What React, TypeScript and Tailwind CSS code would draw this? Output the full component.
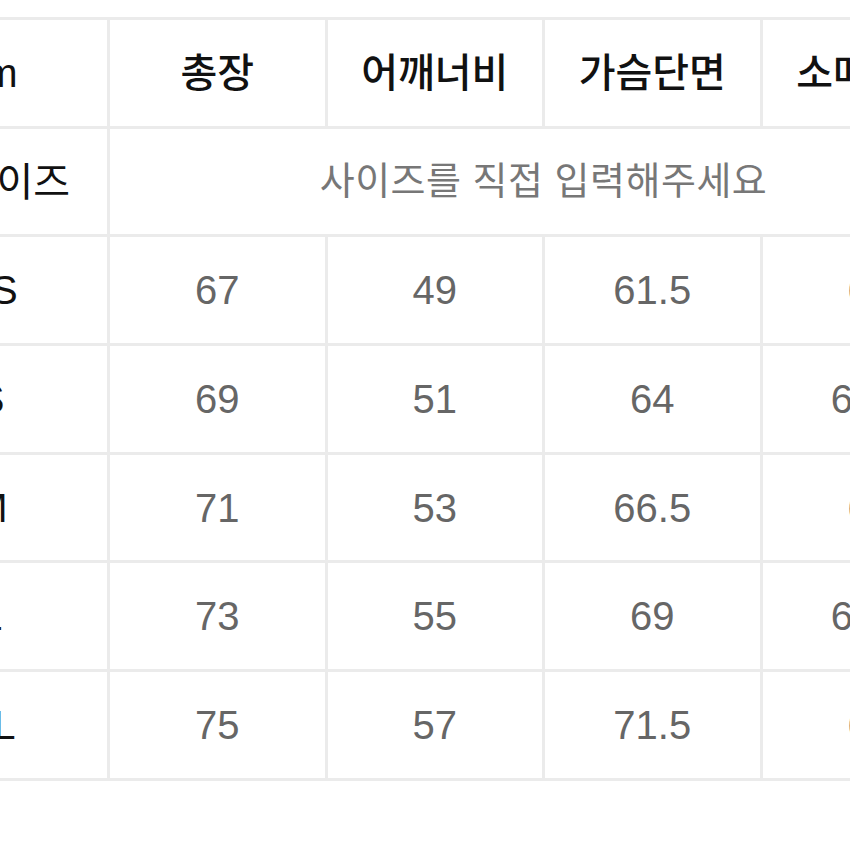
import React from "react";

const font = { fontFamily: '"Liberation Sans", "Noto Sans CJK KR", sans-serif' };

const headers = ["총장", "어깨너비", "가슴단면", "소매길이"];

const rows: { size: string; values: string[] }[] = [
  { size: "XS", values: ["67", "49", "61.5", "60"] },
  { size: "S", values: ["69", "51", "64", "61.5"] },
  { size: "M", values: ["71", "53", "66.5", "63"] },
  { size: "L", values: ["73", "55", "69", "64.5"] },
  { size: "XL", values: ["75", "57", "71.5", "66"] },
];

function Cell({ children, className = "" }: { children: React.ReactNode; className?: string }) {
  return (
    <div className={`bg-white flex items-center justify-center whitespace-nowrap ${className}`}>
      {children}
    </div>
  );
}

export default function App() {
  return (
    <div className="w-[850px] h-[850px] bg-white overflow-hidden" style={font}>
      <div className="pt-[17px] ml-[-128px]">
        <div className="grid grid-cols-[232px_214.5px_214.5px_214.5px_214.5px] auto-rows-[105.7px] gap-[3px] p-[3px] bg-[#ebebeb] w-max">
          {/* header */}
          <Cell className="text-[40px] text-[#111]">cm</Cell>
          {headers.map((h) => (
            <Cell key={h} className="text-[40px] font-medium text-[#111]">
              {h}
            </Cell>
          ))}

          {/* my size row */}
          <Cell className="text-[40px] text-[#111]">내 사이즈</Cell>
          <Cell className="col-span-4 text-[38px] tracking-[0.5px] text-[#777]">사이즈를 직접 입력해주세요</Cell>

          {rows.map((r) => (
            <React.Fragment key={r.size}>
              <Cell className="text-[40px] text-[#111]">{r.size}</Cell>
              {r.values.map((v, i) => (
                <Cell key={i} className="text-[40px] text-[#666]">
                  {v}
                </Cell>
              ))}
            </React.Fragment>
          ))}
        </div>
      </div>
    </div>
  );
}
